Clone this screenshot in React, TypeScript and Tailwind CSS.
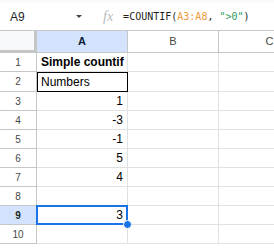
import React from 'react';

type Row = { n: number; a: string; align?: 'left' | 'right'; bold?: boolean; boxed?: boolean; selected?: boolean; h: string };

const rows: Row[] = [
  { n: 1, a: 'Simple countif', bold: true, h: 'h-[19px]' },
  { n: 2, a: 'Numbers', boxed: true, h: 'h-[20px]' },
  { n: 3, a: '1', align: 'right', h: 'h-[19px]' },
  { n: 4, a: '-3', align: 'right', h: 'h-[19px]' },
  { n: 5, a: '-1', align: 'right', h: 'h-[19px]' },
  { n: 6, a: '5', align: 'right', h: 'h-[19px]' },
  { n: 7, a: '4', align: 'right', h: 'h-[19px]' },
  { n: 8, a: '', h: 'h-[19px]' },
  { n: 9, a: '3', align: 'right', selected: true, h: 'h-[19px]' },
  { n: 10, a: '', h: 'h-[19px]' },
];

export default function App() {
  return (
    <div className="w-[274px] h-[248px] overflow-hidden bg-white font-['Liberation_Sans',Arial,sans-serif] text-black">
      {/* top strip */}
      <div className="h-[3px] bg-[#f9fbfd]" />

      {/* formula bar */}
      <div className="h-[28px] flex items-center border-b border-[#c7c7c7]">
        <span className="ml-[10px] w-[64px] text-[12px] text-[#1f1f1f]">A9</span>
        <span className="ml-[2px] w-0 h-0 border-l-[3px] border-r-[3px] border-t-[3px] border-l-transparent border-r-transparent border-t-[#444746]" />
        <span className="ml-[21px] font-['Liberation_Serif',serif] italic text-[14px] text-[#b9b9b9] leading-none">fx</span>
        <span className="ml-[10px] font-['DejaVu_Sans_Mono',monospace] text-[10px] text-[#1f1f1f] whitespace-pre">
          =COUNTIF(<span className="text-[#f0993a]">A3:A8</span>, <span className="text-[#2f9e5a]">"&gt;0"</span>)
        </span>
      </div>

      {/* column headers */}
      <div className="flex h-[22px]">
        <div className="w-[37px] shrink-0 bg-[#f8f9fa] border-r-[3px] border-b-[3px] border-[#c4c7c5]" />
        <div className="w-[91px] shrink-0 flex items-center justify-center bg-[#d3e3fd] border-r border-b border-[#c4c7c5] text-[11px] font-bold text-[#0b1f3a]">A</div>
        <div className="w-[91px] shrink-0 flex items-center justify-center border-r border-b border-[#c4c7c5] text-[11px] text-[#444746]">B</div>
        <div className="flex-1 flex items-center justify-center pl-[46px] border-b border-[#c4c7c5] text-[11px] text-[#444746]">C</div>
      </div>

      {/* rows */}
      {rows.map((r) => (
        <div key={r.n} className={`flex ${r.h}`}>
          <div
            className={`w-[37px] shrink-0 flex items-center justify-center border-r border-b border-[#c4c7c5] text-[10px] ${
              r.selected ? 'bg-[#d3e3fd] font-bold text-[#1f1f1f]' : 'text-[#444746]'
            }`}
          >
            {r.n}
          </div>
          <div
            className={`relative w-[91px] shrink-0 flex items-center border-r border-b border-[#e1e1e1] text-[12px] ${
              r.align === 'right' ? 'justify-end pr-[4px]' : 'justify-start pl-[4px]'
            } ${r.bold ? 'font-bold whitespace-nowrap' : ''} ${r.boxed ? 'outline outline-1 outline-black -outline-offset-1' : ''} ${
              r.selected ? 'z-10' : ''
            }`}
          >
            {r.a}
            {r.selected && (
              <>
                <div className="absolute inset-[-1px] border-2 border-[#1a73e8]" />
                <div className="absolute right-[-5px] bottom-[-5px] w-[9px] h-[9px] rounded-full bg-[#1a73e8] border border-white" />
              </>
            )}
          </div>
          <div className="w-[91px] shrink-0 border-r border-b border-[#e1e1e1]" />
          <div className="flex-1 border-b border-[#e1e1e1]" />
        </div>
      ))}
    </div>
  );
}
